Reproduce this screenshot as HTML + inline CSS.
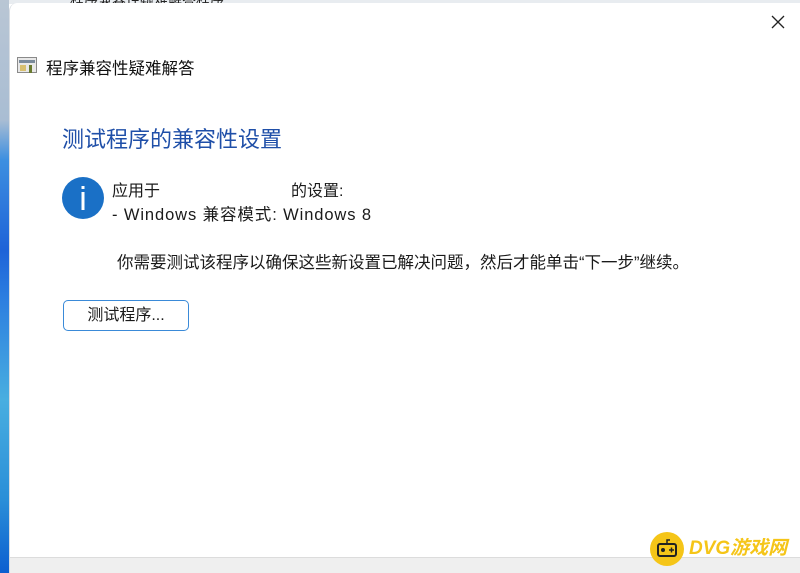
<!DOCTYPE html>
<html><head><meta charset="utf-8"><style>
*{margin:0;padding:0;box-sizing:border-box}
body{width:800px;height:573px;overflow:hidden;position:relative;background:#fff;font-family:"Liberation Sans","Noto Sans CJK SC",sans-serif;color:#1a1a1a}
.strip{position:absolute;left:0;top:0;width:9px;height:573px;background:linear-gradient(180deg,#b9c6d4 0,#a9bdd3 120px,#3d8fe0 160px,#1e63d8 250px,#2d7fe0 300px,#49aee0 400px,#2a8ed8 500px,#0c5fd0 573px)}
.topbg{position:absolute;left:0;top:0;width:800px;height:4px;background:#e8ecf0}
.win{position:absolute;left:9px;top:3px;width:791px;height:570px;background:#fff;border-radius:8px 0 0 0;border-left:1px solid #d8dde3}
.foot{position:absolute;left:10px;top:557px;width:790px;height:16px;background:#efefef;border-top:1px solid #dcdcdc}
.t{position:absolute;white-space:nowrap}
</style></head><body>
<div class="topbg"></div>
<div class="t" style="left:70px;top:-10px;font-size:14px;color:#222">程序兼容性疑难解答程序</div>
<div class="strip"></div>
<div class="win"></div>
<div class="foot"></div>
<svg class="t" style="left:770px;top:14px" width="16" height="16"><path d="M2 2L14 14M14 2L2 14" stroke="#222" stroke-width="1.3"/></svg>
<svg class="t" style="left:17px;top:57px" width="20" height="17"><rect x="0.5" y="0.5" width="19" height="15" fill="#e8e8e8" stroke="#8a8a8a"/><rect x="2" y="3" width="16" height="3" fill="#7a8a9a"/><rect x="3" y="8" width="6" height="6" fill="#d8c070"/><rect x="12" y="8" width="3" height="8" fill="#6a7a30"/></svg>
<div class="t" style="left:46px;top:55px;font-size:16.5px;color:#111">程序兼容性疑难解答</div>
<div class="t" style="left:62px;top:122px;font-size:22px;color:#1f4fa8">测试程序的兼容性设置</div>
<svg class="t" style="left:62px;top:177px" width="42" height="42"><circle cx="21" cy="21" r="21" fill="#1a70c6"/><rect x="19.5" y="15" width="3" height="18" fill="#fff"/><rect x="19.5" y="9" width="3" height="3" fill="#fff"/></svg>
<div class="t" style="left:112px;top:177px;font-size:16px">应用于</div>
<div class="t" style="left:291px;top:177px;font-size:16px">的设置:</div>
<div class="t" style="left:112px;top:201px;font-size:16.5px;letter-spacing:0.9px">- Windows 兼容模式: Windows 8</div>
<div class="t" style="left:117px;top:249px;font-size:16.5px">你需要测试该程序以确保这些新设置已解决问题，然后才能单击“下一步”继续。</div>
<div class="t" style="left:63px;top:300px;width:126px;height:31px;border:1px solid #3a8ad8;border-radius:5px;font-size:16px;text-align:center;line-height:29px;background:#fff">测试程序...</div>
<svg class="t" style="left:650px;top:532px" width="34" height="34"><circle cx="17" cy="17" r="17" fill="#f5c518"/><rect x="8" y="12" width="18" height="12" rx="2" fill="none" stroke="#222" stroke-width="2"/><path d="M17 12V8h3" stroke="#222" stroke-width="1.5" fill="none"/><circle cx="13" cy="18" r="2" fill="#222"/><path d="M19 18h5M21.5 15.5v5" stroke="#222" stroke-width="1.5"/></svg>
<div class="t" style="left:689px;top:533px;font-size:19px;font-weight:bold;font-style:italic;color:#f5c518">DVG游戏网</div>
</body></html>
